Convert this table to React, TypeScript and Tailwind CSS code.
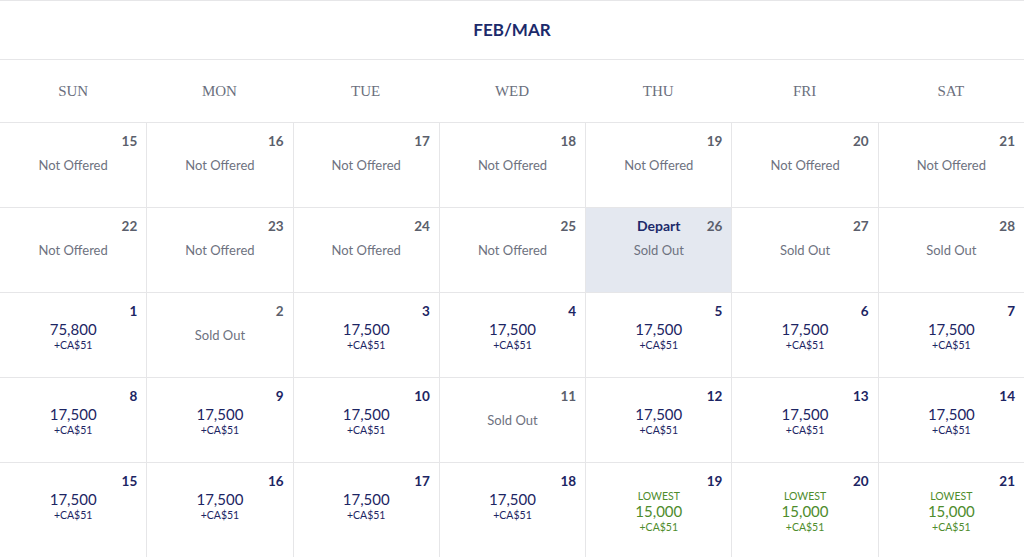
type Cell =
  | { day: number; kind: "none" }
  | { day: number; kind: "sold"; depart?: boolean }
  | { day: number; kind: "price"; miles: string; lowest?: boolean };

const weekdays = ["SUN", "MON", "TUE", "WED", "THU", "FRI", "SAT"];

const na = (day: number): Cell => ({ day, kind: "none" });
const sold = (day: number): Cell => ({ day, kind: "sold" });
const price = (day: number, miles = "17,500"): Cell => ({ day, kind: "price", miles });
const low = (day: number): Cell => ({ day, kind: "price", miles: "15,000", lowest: true });

const weeks: Cell[][] = [
  [na(15), na(16), na(17), na(18), na(19), na(20), na(21)],
  [na(22), na(23), na(24), na(25), { day: 26, kind: "sold", depart: true }, sold(27), sold(28)],
  [price(1, "75,800"), sold(2), price(3), price(4), price(5), price(6), price(7)],
  [price(8), price(9), price(10), sold(11), price(12), price(13), price(14)],
  [price(15), price(16), price(17), price(18), low(19), low(20), low(21)],
];

function DayCell({ cell, col, last }: { cell: Cell; col: number; last: boolean }) {
  const available = cell.kind === "price";
  const depart = cell.kind === "sold" && cell.depart;
  return (
    <div
      className={`flex flex-col pt-[10px] ${last ? "h-[100px]" : "h-[85px] border-b"} border-[#e6e6e8] ${
        col > 0 ? "border-l" : ""
      } ${depart ? "bg-[#e4e8f0]" : "bg-white"}`}
    >
      <div className="grid h-[16px] leading-[16px] text-[13.5px] font-bold">
        {depart && (
          <span className="col-start-1 row-start-1 justify-self-center text-[14px] text-[#1c2a6b]">Depart</span>
        )}
        <span
          className={`col-start-1 row-start-1 justify-self-end pr-[9px] ${
            available ? "text-[#1c2563]" : "text-[#5b5f6c]"
          }`}
        >
          {cell.day}
        </span>
      </div>
      {cell.kind === "none" && (
        <div className="mt-[6px] text-center text-[13px] leading-[20px] text-[#6e7280]">Not Offered</div>
      )}
      {cell.kind === "sold" && (
        <div className="mt-[6px] text-center text-[13px] leading-[20px] text-[#6e7280]">Sold Out</div>
      )}
      {cell.kind === "price" && !cell.lowest && (
        <div className="mt-[1px] flex flex-col items-center text-[#1c2563]">
          <span className="text-[15px] leading-[18px]">{cell.miles}</span>
          <span className="text-[10.5px] leading-[14px]">+CA$51</span>
        </div>
      )}
      {cell.kind === "price" && cell.lowest && (
        <div className="flex flex-col items-center text-[#4e8c2c]">
          <span className="text-[10.5px] leading-[14px]">LOWEST</span>
          <span className="text-[15px] leading-[17px]">{cell.miles}</span>
          <span className="text-[10.5px] leading-[14px]">+CA$51</span>
        </div>
      )}
    </div>
  );
}

export default function App() {
  return (
    <div className="h-[557px] w-[1024px] overflow-hidden bg-white font-['Lato','Open_Sans',sans-serif]">
      <div className="flex h-[60px] items-center justify-center border-y border-[#e6e6e8] text-[17px] font-bold text-[#1c2a6b]">
        FEB/MAR
      </div>
      <div className="grid h-[63px] grid-cols-7 border-b border-[#e6e6e8]">
        {weekdays.map((d) => (
          <div
            key={d}
            className="flex items-center justify-center font-['Liberation_Serif',serif] text-[15px] text-[#6b6f7d]"
          >
            {d}
          </div>
        ))}
      </div>
      <div className="grid grid-cols-7">
        {weeks.map((week, wi) =>
          week.map((cell, ci) => (
            <DayCell key={`${wi}-${ci}`} cell={cell} col={ci} last={wi === weeks.length - 1} />
          ))
        )}
      </div>
    </div>
  );
}
